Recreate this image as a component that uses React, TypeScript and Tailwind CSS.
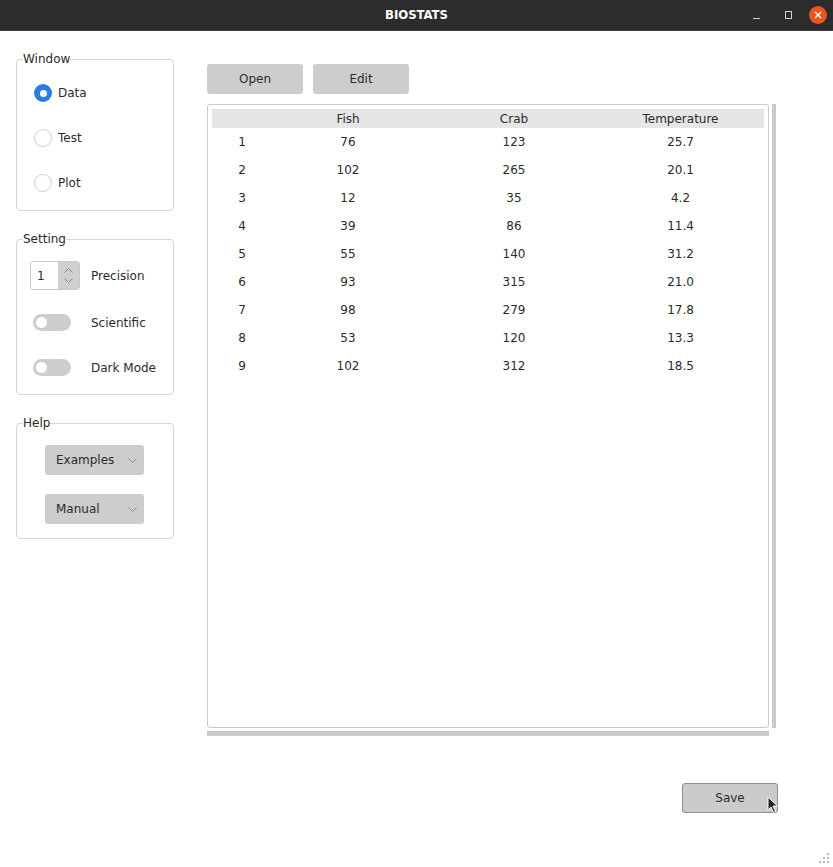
import React from "react";

const rows = [
  ["1", "76", "123", "25.7"],
  ["2", "102", "265", "20.1"],
  ["3", "12", "35", "4.2"],
  ["4", "39", "86", "11.4"],
  ["5", "55", "140", "31.2"],
  ["6", "93", "315", "21.0"],
  ["7", "98", "279", "17.8"],
  ["8", "53", "120", "13.3"],
  ["9", "102", "312", "18.5"],
];

function Chevron({ up = false }: { up?: boolean }) {
  return (
    <svg width="9" height="5" viewBox="0 0 9 5" className="block">
      <path
        d={up ? "M0.5 4.5 L4.5 0.5 L8.5 4.5" : "M0.5 0.5 L4.5 4.5 L8.5 0.5"}
        fill="none"
        stroke="#8c8c8c"
        strokeWidth="1"
      />
    </svg>
  );
}

function Radio({ checked, label }: { checked?: boolean; label: string }) {
  return (
    <div className="flex items-center h-[18px]">
      {checked ? (
        <div className="w-[18px] h-[18px] rounded-full bg-[#2a7be4] flex items-center justify-center">
          <div className="w-[7px] h-[7px] rounded-full bg-white" />
        </div>
      ) : (
        <div className="w-[18px] h-[18px] rounded-full border border-[#cfcfcf] bg-white" />
      )}
      <span className="ml-[6px]">{label}</span>
    </div>
  );
}

function Toggle({ label, className = "" }: { label: string; className?: string }) {
  return (
    <div className={"flex items-center h-[29px] " + className}>
      <div className="w-[61px] pl-[3px]">
        <div className="w-[38px] h-[17px] rounded-full bg-[#cdcdcd] flex items-center pl-[3px]">
          <div className="w-[11px] h-[11px] rounded-full bg-white" />
        </div>
      </div>
      <span>{label}</span>
    </div>
  );
}

function DropButton({ label }: { label: string }) {
  return (
    <div className="w-[99px] h-[30px] rounded-[3px] bg-[#cdcdcd] flex items-center justify-between pl-[11px] pr-[7px]">
      <span>{label}</span>
      <Chevron />
    </div>
  );
}

export default function App() {
  return (
    <div
      className="w-[833px] h-[867px] bg-white text-[12px] text-[#2b2b2b] flex flex-col relative overflow-hidden"
      style={{ fontFamily: '"DejaVu Sans", sans-serif' }}
    >
      {/* Title bar */}
      <div className="h-[31px] bg-[#2c2c2c] border-b border-[#3d3d3d] flex items-center relative">
        <div
          className="flex-1 text-center text-white font-bold text-[13px]"
          style={{ fontFamily: '"DejaVu Sans Condensed", "DejaVu Sans", sans-serif' }}
        >
          BIOSTATS
        </div>
        <div className="absolute right-[6px] top-[5px] flex items-center">
          <div className="w-[32px] h-[20px] flex items-end justify-center pb-[6px]">
            <div className="w-[7px] h-[1.5px] bg-[#d0d0d0]" />
          </div>
          <div className="w-[32px] h-[20px] flex items-center justify-center">
            <div className="w-[7px] h-[8px] border border-[#d0d0d0]" />
          </div>
          <div className="w-[18px] h-[18px] rounded-full bg-[#e95420] flex items-center justify-center ml-[5px]">
            <svg width="8" height="8" viewBox="0 0 8 8">
              <path d="M1 1 L7 7 M7 1 L1 7" stroke="white" strokeWidth="1.3" />
            </svg>
          </div>
        </div>
      </div>

      <div className="flex">
        {/* Left column */}
        <div className="ml-[16px] mt-[20px] w-[158px] flex flex-col">
          <fieldset className="border border-[#d6d6d6] rounded-[4px] h-[160px]">
            <legend className="ml-[6px] leading-[16px] text-[12px]">Window</legend>
            <div className="pl-[17px] pt-[17px] flex flex-col gap-[27px]">
              <Radio checked label="Data" />
              <Radio label="Test" />
              <Radio label="Plot" />
            </div>
          </fieldset>

          <fieldset className="border border-[#d6d6d6] rounded-[4px] h-[164px] mt-[20px]">
            <legend className="ml-[6px] leading-[16px] text-[12px]">Setting</legend>
            <div className="pl-[13px] pt-[14px] flex flex-col">
              <div className="flex items-center h-[29px]">
                <div className="w-[61px]">
                  <div className="w-[50px] h-[29px] border border-[#cacaca] rounded-[3px] flex overflow-hidden">
                    <div className="flex-1 bg-white flex items-center pl-[6px]">1</div>
                    <div className="w-[21px] bg-[#d0d0d0] flex flex-col items-center justify-center gap-[5px]">
                      <Chevron up />
                      <Chevron />
                    </div>
                  </div>
                </div>
                <span>Precision</span>
              </div>
              <Toggle label="Scientific" className="mt-[18px]" />
              <Toggle label="Dark Mode" className="mt-[16px]" />
            </div>
          </fieldset>

          <fieldset className="border border-[#d6d6d6] rounded-[4px] h-[124px] mt-[20px]">
            <legend className="ml-[6px] leading-[16px] text-[12px]">Help</legend>
            <div className="pl-[28px] pt-[14px] flex flex-col gap-[19px]">
              <DropButton label="Examples" />
              <DropButton label="Manual" />
            </div>
          </fieldset>
        </div>

        {/* Right column */}
        <div className="ml-[33px] mt-[33px] w-[571px] flex flex-col">
          <div className="flex gap-[10px]">
            <div className="w-[96px] h-[30px] rounded-[3px] bg-[#cdcdcd] flex items-center justify-center">Open</div>
            <div className="w-[96px] h-[30px] rounded-[3px] bg-[#cdcdcd] flex items-center justify-center">Edit</div>
          </div>

          <div className="flex mt-[10px]">
            <div className="w-[562px] h-[624px] border border-[#cbcbcb] rounded-[3px] p-[4px]">
              <div className="grid grid-cols-[53px_166px_166px_167px] h-[19px] bg-[#e6e6e6] items-center text-center">
                <div />
                <div>Fish</div>
                <div>Crab</div>
                <div>Temperature</div>
              </div>
              {rows.map((r) => (
                <div key={r[0]} className="grid grid-cols-[53px_166px_166px_167px] h-[28px] items-center text-center">
                  <div className="pl-[7px]">{r[0]}</div>
                  <div>{r[1]}</div>
                  <div>{r[2]}</div>
                  <div>{r[3]}</div>
                </div>
              ))}
            </div>
            <div className="ml-[3px] w-[4px] h-[624px] bg-[#c9c9c9]" />
          </div>
          <div className="w-[562px] h-[5px] mt-[3px] bg-[#c9c9c9]" />

          <div className="flex justify-end mt-[47px]">
            <div className="w-[96px] h-[30px] rounded-[3px] bg-[#cbcbcb] border border-[#8e8e8e] flex items-center justify-center">
              Save
            </div>
          </div>
        </div>
      </div>

      {/* mouse cursor */}
      <svg className="absolute left-[767px] top-[796px]" width="12" height="18" viewBox="0 0 12 18">
        <path d="M1 1 L1 14 L4 11 L6.5 16.5 L8.5 15.5 L6 10 L10.5 10 Z" fill="#222" stroke="#fff" strokeWidth="1" />
      </svg>

      {/* resize grip */}
      <svg className="absolute right-[3px] bottom-[3px]" width="12" height="12" viewBox="0 0 12 12">
        {[
          [10, 2],
          [6, 6],
          [10, 6],
          [2, 10],
          [6, 10],
          [10, 10],
        ].map(([x, y], i) => (
          <rect key={i} x={x - 1} y={y - 1} width="2" height="2" fill="#b8b8b8" />
        ))}
      </svg>
    </div>
  );
}
